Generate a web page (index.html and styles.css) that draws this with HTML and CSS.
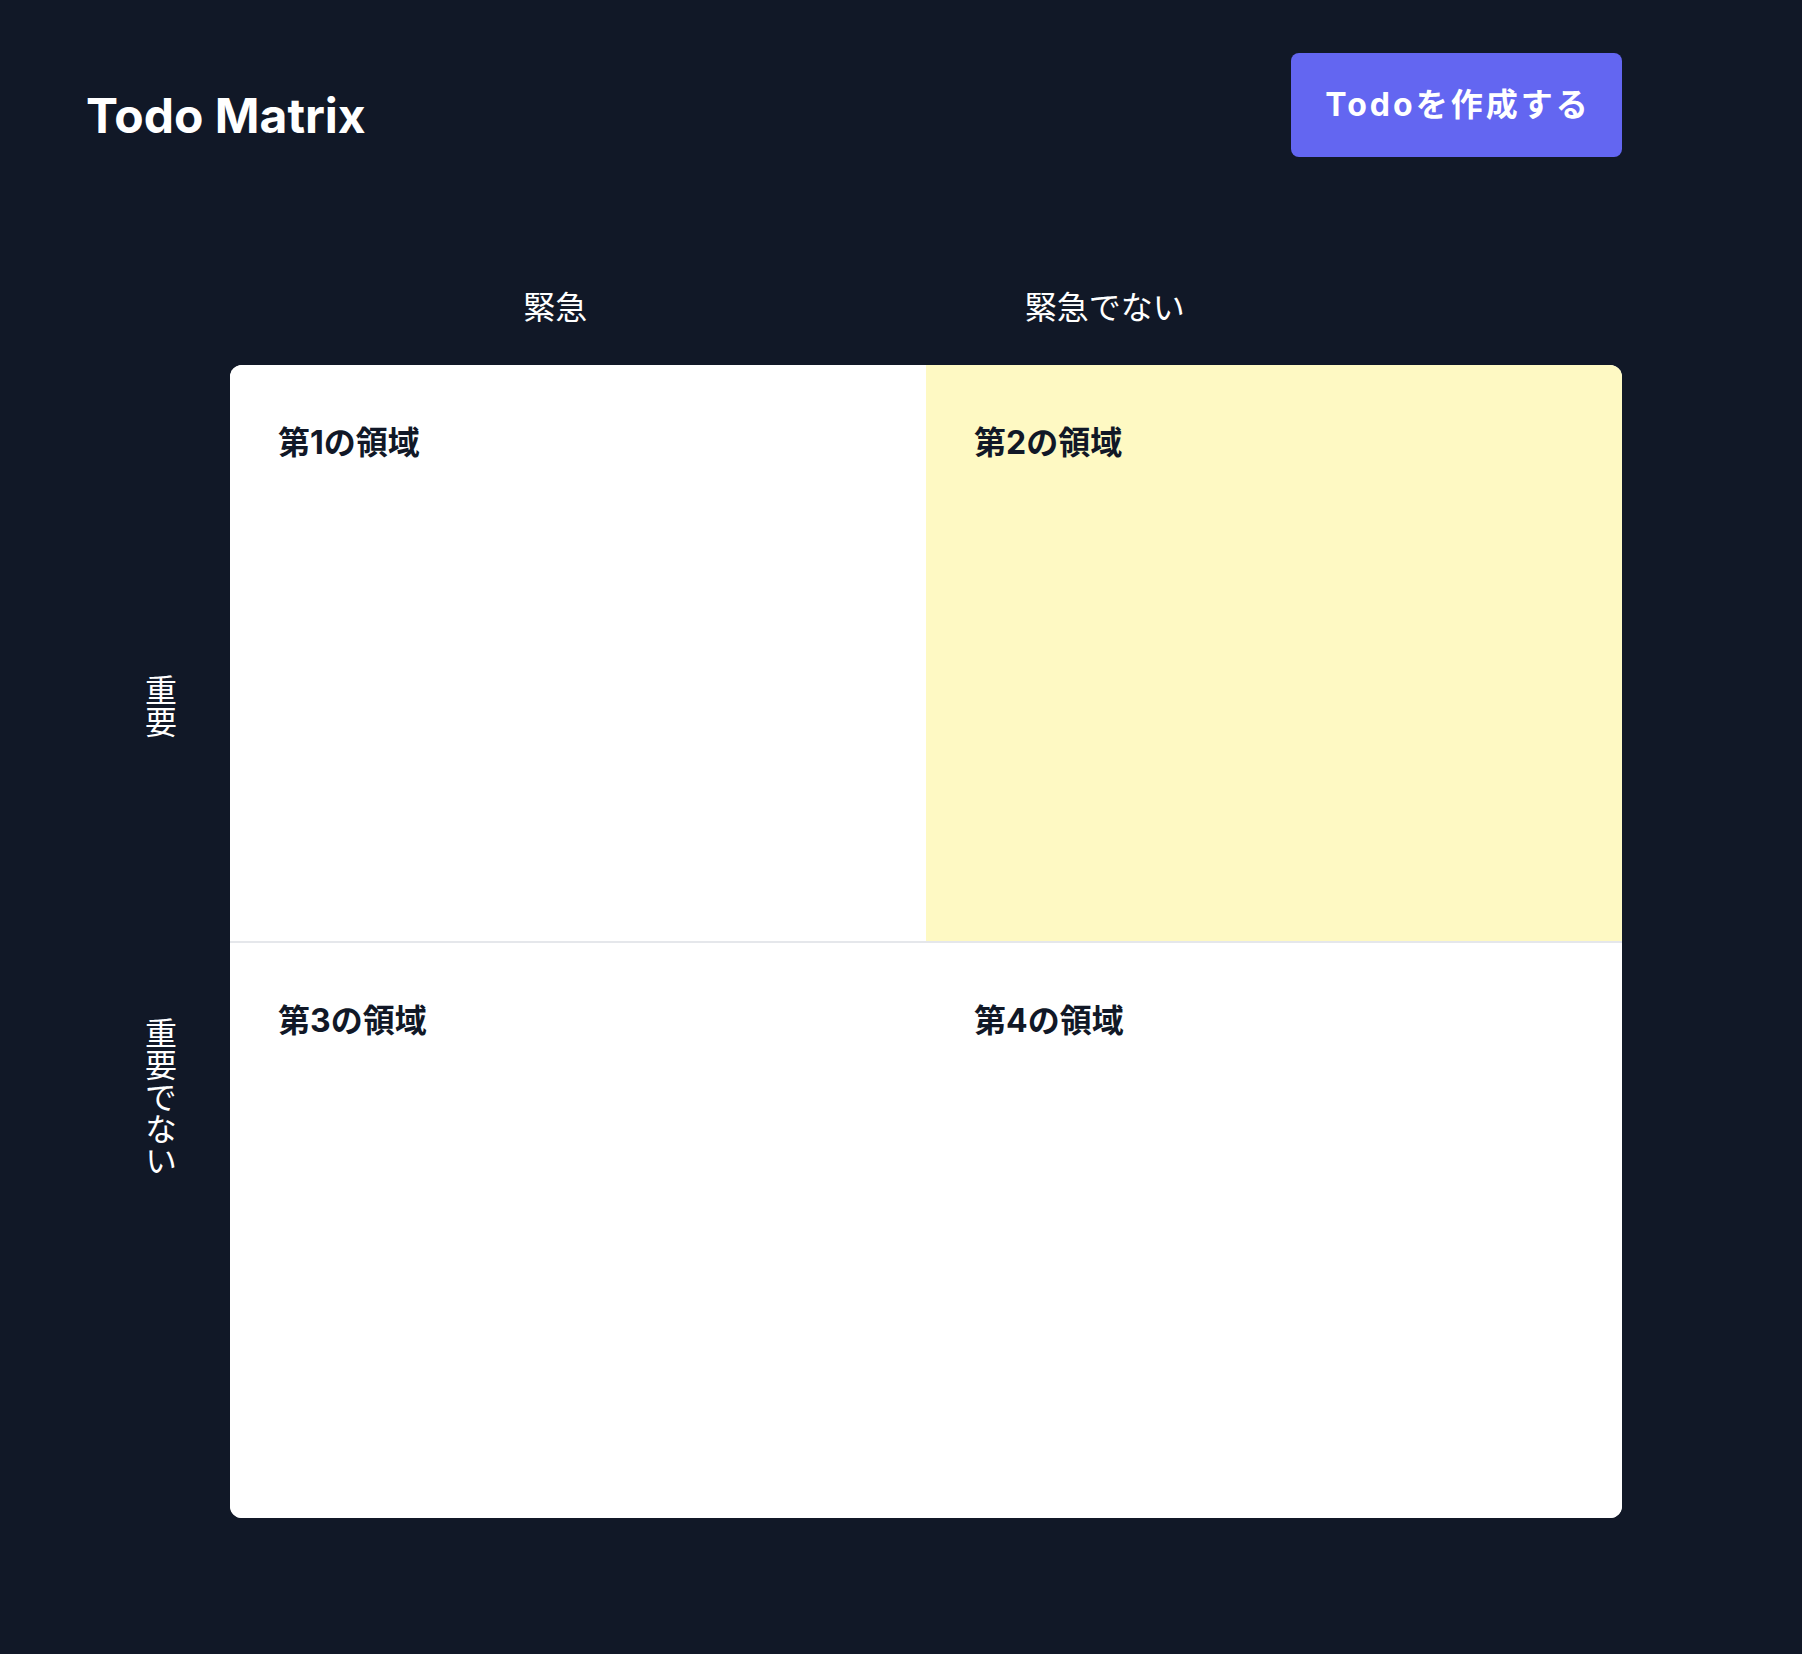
FILE: index.html
```html
<!DOCTYPE html>
<html lang="ja">
<head>
<meta charset="utf-8">
<title>Todo Matrix</title>
<link rel="stylesheet" href="styles.css">
</head>
<body>
<div class="page">
  <header class="header">
    <h1 class="title">Todo Matrix</h1>
    <button class="create-btn" type="button">Todoを作成する</button>
  </header>
  <div class="col-labels">
    <span class="col-label">緊急</span>
    <span class="col-label">緊急でない</span>
  </div>
  <div class="board">
    <div class="row-labels">
      <span class="row-label">重要</span>
      <span class="row-label">重要でない</span>
    </div>
    <div class="matrix">
      <section class="cell cell-top"><h2 class="cell-title">第1の領域</h2></section>
      <section class="cell cell-top cell-yellow"><h2 class="cell-title">第2の領域</h2></section>
      <section class="cell"><h2 class="cell-title">第3の領域</h2></section>
      <section class="cell"><h2 class="cell-title">第4の領域</h2></section>
    </div>
  </div>
</div>
</body>
</html>
```

FILE: styles.css
```css
html, body {
  margin: 0;
  padding: 0;
}
body {
  background: #111827;
  color: #ffffff;
  font-family: "Inter", "Noto Sans CJK JP", sans-serif;
  width: 1802px;
  height: 1654px;
  overflow: hidden;
}
.page {
  padding: 53px 180px 0 86px;
}
.header {
  display: flex;
  justify-content: space-between;
  align-items: flex-start;
}
.title {
  margin: 39px 0 0 0;
  font-size: 48px;
  line-height: 48px;
  font-weight: 700;
  color: #ffffff;
}
.create-btn {
  font-family: "Inter", "Noto Sans CJK JP", sans-serif;
  background: #6366f1;
  color: #ffffff;
  border: none;
  border-radius: 8px;
  font-size: 32px;
  line-height: 48px;
  font-weight: 700;
  letter-spacing: 3px;
  width: 331px;
  height: 104px;
  padding: 0 0 0 3px;
  text-align: center;
}
.col-labels {
  margin-top: 127px;
  display: flex;
  justify-content: space-evenly;
}
.col-label {
  font-size: 32px;
  line-height: 48px;
  color: #ffffff;
}
.board {
  margin-top: 33px;
  display: flex;
}
.row-labels {
  width: 144px;
  display: flex;
  flex-direction: column;
  align-items: center;
  padding-top: 309px;
  gap: 279px;
}
.row-label {
  writing-mode: vertical-rl;
  font-size: 32px;
  line-height: 48px;
  color: #ffffff;
}
.matrix {
  flex: 1;
  height: 1153px;
  background: #ffffff;
  border-radius: 12px;
  overflow: hidden;
  display: grid;
  grid-template-columns: 1fr 1fr;
  grid-template-rows: 578px 575px;
}
.cell {
  padding: 54px 48px;
  box-sizing: border-box;
  background: #ffffff;
}
.cell-top {
  border-bottom: 2px solid #e5e7eb;
}
.cell-yellow {
  background: #fef9c3;
}
.cell-title {
  margin: 0;
  font-size: 32px;
  line-height: 48px;
  font-weight: 700;
  color: #111827;
}
```
